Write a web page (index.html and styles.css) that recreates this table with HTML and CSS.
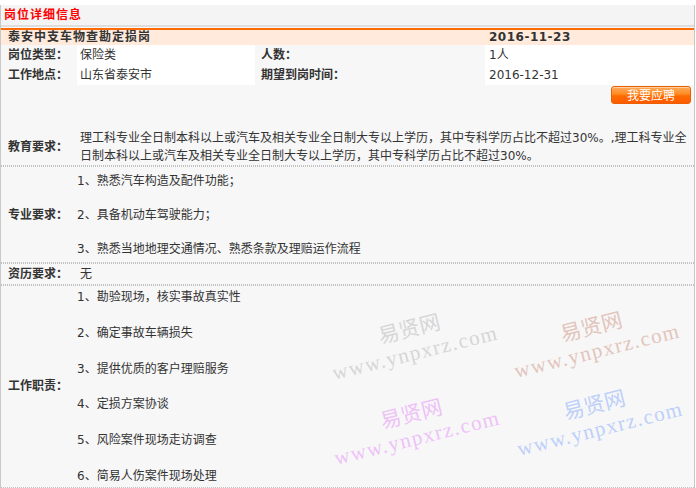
FILE: index.html
```html
<!DOCTYPE html>
<html lang="zh-CN">
<head>
<meta charset="utf-8">
<title>岗位详细信息</title>
<link rel="stylesheet" href="styles.css">
</head>
<body>
<div class="page">
  <div class="hd"><span class="hd-title">岗位详细信息</span></div>
  <div class="jt">
    <span class="jt-name">泰安中支车物查勘定损岗</span>
    <span class="jt-date">2016-11-23</span>
  </div>
  <div class="info">
    <div class="lbl">岗位类型：</div>
    <div class="val">保险类</div>
    <div class="lbl l2">人数：</div>
    <div class="val v2">1人</div>
    <div class="lbl">工作地点：</div>
    <div class="val">山东省泰安市</div>
    <div class="lbl l2">期望到岗时间：</div>
    <div class="val v2">2016-12-31</div>
  </div>
  <div class="apply-row"><button class="apply" type="button">我要应聘</button></div>

  <div class="row edu">
    <div class="lbl">教育要求：</div>
    <div class="val">理工科专业全日制本科以上或汽车及相关专业全日制大专以上学历，其中专科学历占比不超过30%。,理工科专业全日制本科以上或汽车及相关专业全日制大专以上学历，其中专科学历占比不超过30%。</div>
  </div>

  <div class="row major">
    <div class="lbl">专业要求：</div>
    <div class="val list">
      <div class="item">1、熟悉汽车构造及配件功能；</div>
      <div class="item">2、具备机动车驾驶能力；</div>
      <div class="item">3、熟悉当地地理交通情况、熟悉条款及理赔运作流程</div>
    </div>
  </div>

  <div class="row exp">
    <div class="lbl">资历要求：</div>
    <div class="val">无</div>
  </div>

  <div class="row duty">
    <div class="lbl">工作职责：</div>
    <div class="val list">
      <div class="item">1、勘验现场，核实事故真实性</div>
      <div class="item">2、确定事故车辆损失</div>
      <div class="item">3、提供优质的客户理赔服务</div>
      <div class="item">4、定损方案协谈</div>
      <div class="item">5、风险案件现场走访调查</div>
      <div class="item">6、简易人伤案件现场处理</div>
    </div>
  </div>

  <div class="wm wm-gray"><div class="wm-cn">易贤网</div><div class="wm-en">www.ynpxrz.com</div></div>
  <div class="wm wm-brown"><div class="wm-cn">易贤网</div><div class="wm-en">www.ynpxrz.com</div></div>
  <div class="wm wm-pink"><div class="wm-cn">易贤网</div><div class="wm-en">www.ynpxrz.com</div></div>
  <div class="wm wm-blue"><div class="wm-cn">易贤网</div><div class="wm-en">www.ynpxrz.com</div></div>
</div>
</body>
</html>
```

FILE: styles.css
```css
* {
  box-sizing: border-box;
  margin: 0;
  padding: 0;
}

body {
  background: #fff;
  color: #333;
  font: 12px/18px "DejaVu Sans", "Noto Sans CJK SC", sans-serif;
}

.page {
  position: relative;
  width: 695px;
  margin-top: 5px;
  border-left: 1px solid #c8c8c8;
  border-right: 1px solid #c8c8c8;
  background: #f7f7f7;
  overflow: hidden;
}

.hd {
  height: 22px;
  line-height: 20px;
  padding-left: 3px;
  background: #f4f4f4;
  border-bottom: 2px solid #dedede;
}

.hd-title {
  color: #f00;
  font-weight: bold;
  letter-spacing: 1px;
}

.jt {
  display: flex;
  height: 17px;
  margin-top: 1px;
  line-height: 15px;
  border-top: 2px solid #ff6a00;
  background: #ffeadb;
  font-weight: bold;
}

.jt-name {
  width: 484px;
  padding-left: 7px;
  letter-spacing: 1px;
}

.jt-date {
  padding-left: 4px;
  letter-spacing: 0.5px;
}

.info {
  display: grid;
  grid-template-columns: 76px 178px 230px 1fr;
  grid-template-rows: 20px 20px;
  line-height: 20px;
}

.info .lbl {
  padding-left: 7px;
  font-weight: bold;
}

.info .l2 {
  padding-left: 6px;
}

.info .val {
  padding-left: 3px;
  background: #fff;
}

.info .v2 {
  padding-left: 4px;
}

.apply-row {
  display: flex;
  justify-content: flex-end;
  align-items: flex-start;
  height: 43px;
  padding: 1px 3px 0 0;
}

.apply {
  width: 80px;
  height: 18px;
  border: 1px solid #ec5f00;
  border-radius: 3px;
  background: linear-gradient(#ffac5c 0%, #ff8a22 45%, #ff6c00 55%, #ff5a00 100%);
  box-shadow: inset 0 1px 0 rgba(255, 255, 255, 0.45);
  color: #fff;
  font: 12px/16px "Noto Sans CJK SC", sans-serif;
  cursor: pointer;
}

.row {
  display: flex;
  padding-bottom: 2px;
  background-image: repeating-linear-gradient(90deg, #c2c2c2 0 1px, transparent 1px 2px);
  background-size: 100% 2px;
  background-position: left bottom;
  background-repeat: no-repeat;
}

.row .lbl {
  display: flex;
  align-items: center;
  width: 76px;
  flex: none;
  padding-left: 7px;
  font-weight: bold;
}

.row .val {
  flex: 1;
  padding-left: 3px;
}

.edu .val {
  padding-top: 1px;
  padding-right: 2px;
}

.exp .val {
  line-height: 20px;
}

.list {
  display: flex;
  flex-direction: column;
}

.major .list {
  padding: 5px 0 4px;
  gap: 16px;
}

.duty .list {
  padding: 2px 0 2px;
  gap: 17.8px;
}

.wm {
  position: absolute;
  width: 200px;
  height: 52px;
  text-align: center;
  line-height: 26px;
  transform: rotate(-14deg);
  pointer-events: none;
}

.wm-cn {
  font: 21px/26px "Noto Sans CJK SC", sans-serif;
}

.wm-en {
  font: 21px/26px "Liberation Serif", serif;
  letter-spacing: 1.5px;
  white-space: nowrap;
}

.wm-gray { left: 311px; top: 309px; color: #d6d6d6; }
.wm-brown { left: 493px; top: 307px; color: #e2c5bc; }
.wm-pink { left: 313px; top: 394px; color: #eec2f7; }
.wm-blue { left: 496px; top: 385px; color: #bdd0fa; }
```
